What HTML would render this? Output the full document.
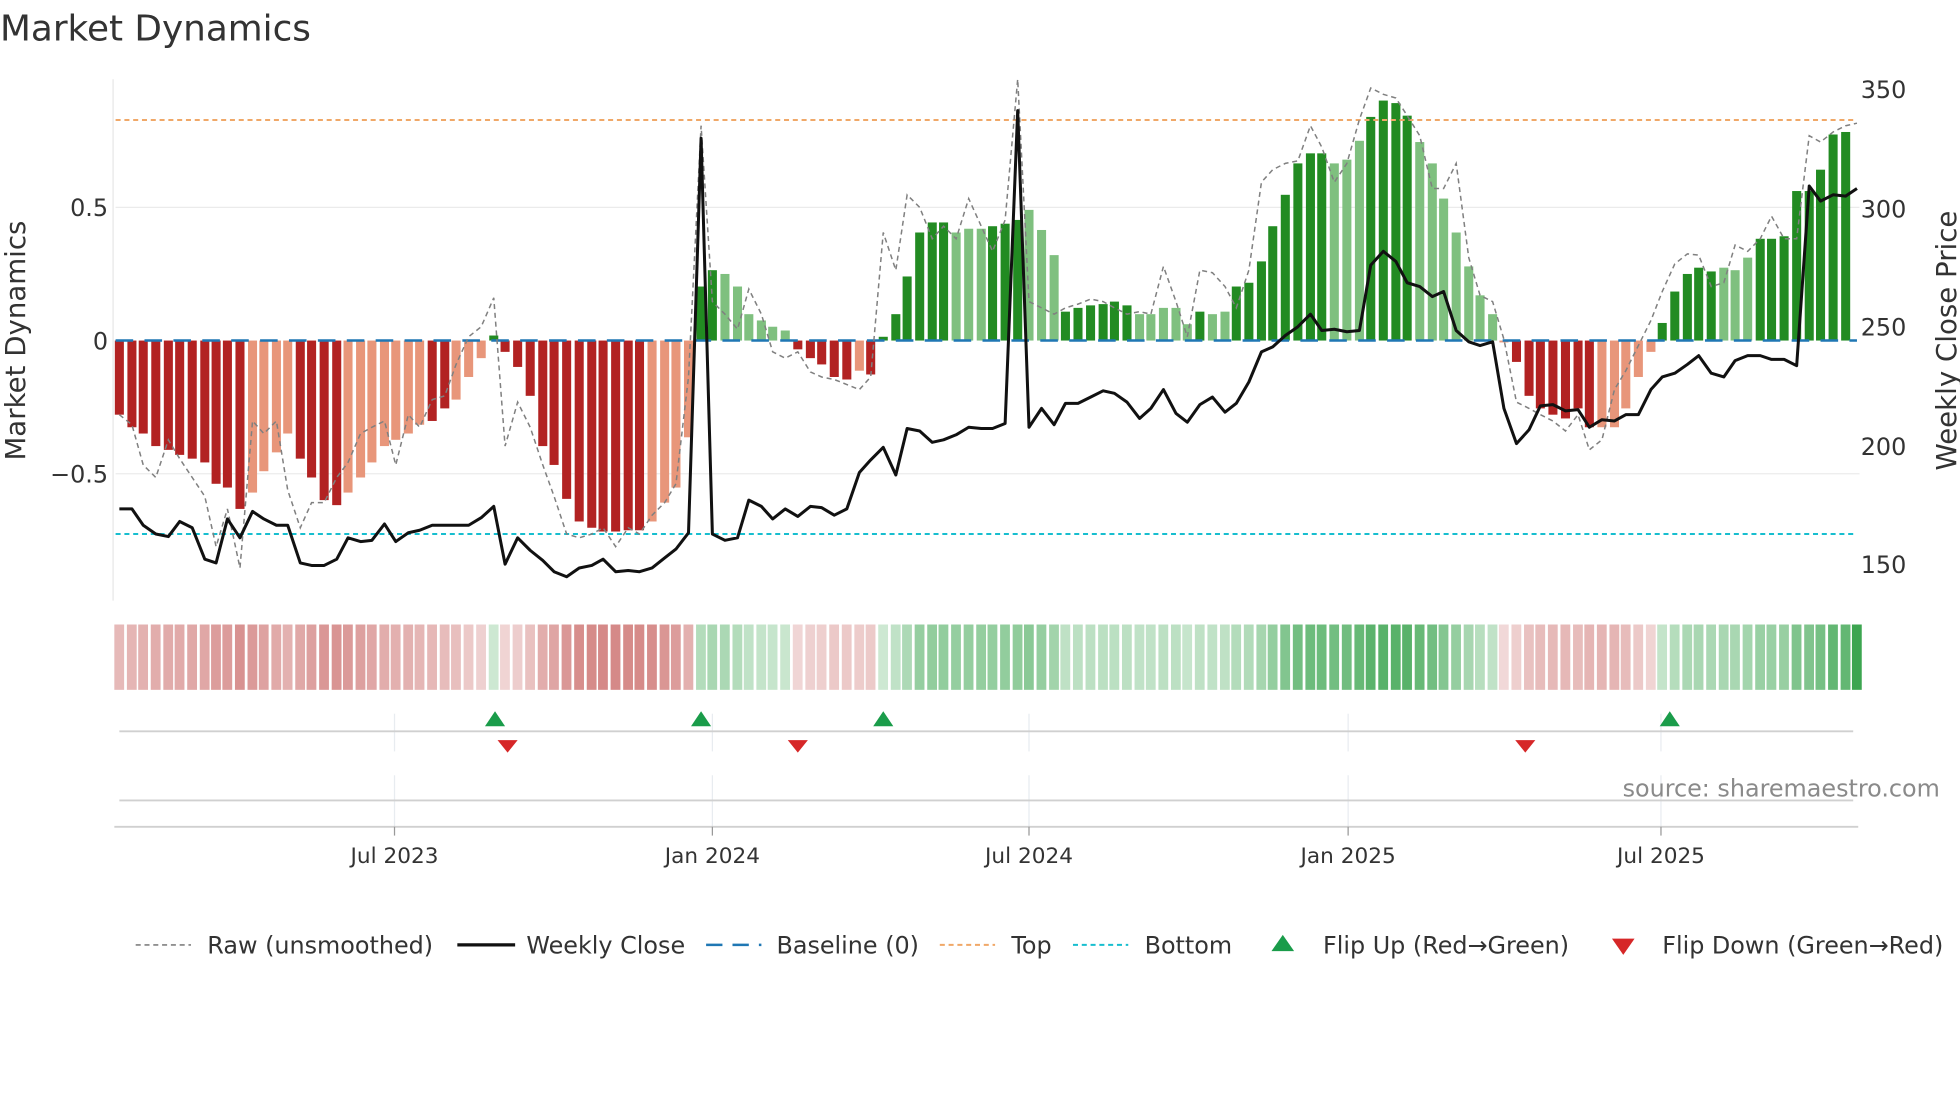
<!DOCTYPE html>
<html><head><meta charset="utf-8"><style>
html,body{margin:0;padding:0;background:#fff;}
svg{display:block;font-family:"DejaVu Sans","Liberation Sans",sans-serif;}
</style></head><body>
<svg id="s" width="1960" height="1102" viewBox="0 0 1560 877" xmlns="http://www.w3.org/2000/svg">
<rect width="1560" height="877" fill="#fff"/>
<text x="0" y="32" font-size="28.5" fill="#333">Market Dynamics</text>
<line x1="90" y1="63" x2="90" y2="478" stroke="#e6e6e6"/>
<line x1="92" y1="165" x2="1480" y2="165" stroke="#ebebeb"/>
<line x1="92" y1="377" x2="1480" y2="377" stroke="#ebebeb"/>
<g id="bars"></g>
<line x1="92" y1="271" x2="1478" y2="271" stroke="#1f77b4" stroke-width="2" stroke-dasharray="14,9"/>
<line x1="92" y1="95.5" x2="1478" y2="95.5" stroke="#f0a868" stroke-width="1.6" stroke-dasharray="4,3"/>
<line x1="92" y1="425" x2="1478" y2="425" stroke="#17becf" stroke-width="1.6" stroke-dasharray="4,3"/>
<polyline id="raw" fill="none" stroke="#808080" stroke-width="1.2" stroke-dasharray="4,3"/>
<polyline id="close" fill="none" stroke="#111" stroke-width="2.4" stroke-linejoin="round"/>
<g font-size="19" fill="#333">
<text x="86" y="172" text-anchor="end">0.5</text>
<text x="86" y="278" text-anchor="end">0</text>
<text x="86" y="384" text-anchor="end">−0.5</text>
<text x="1481" y="78">350</text>
<text x="1481" y="173">300</text>
<text x="1481" y="267">250</text>
<text x="1481" y="362">200</text>
<text x="1481" y="456">150</text>
</g>
<text transform="translate(20,271) rotate(-90)" text-anchor="middle" font-size="22" fill="#333">Market Dynamics</text>
<text transform="translate(1557,271) rotate(-90)" text-anchor="middle" font-size="22" fill="#333">Weekly Close Price</text>
<g id="strip"></g>
<g stroke="#e8ecf0" stroke-width="1">
<line x1="314" y1="568" x2="314" y2="598"/><line x1="567" y1="568" x2="567" y2="598"/><line x1="819" y1="568" x2="819" y2="598"/><line x1="1073" y1="568" x2="1073" y2="598"/><line x1="1322" y1="568" x2="1322" y2="598"/>
<line x1="314" y1="617" x2="314" y2="658"/><line x1="567" y1="617" x2="567" y2="658"/><line x1="819" y1="617" x2="819" y2="658"/><line x1="1073" y1="617" x2="1073" y2="658"/><line x1="1322" y1="617" x2="1322" y2="658"/>
</g>
<line x1="95" y1="582" x2="1475" y2="582" stroke="#d0d0d0" stroke-width="1.5"/>
<line x1="95" y1="637" x2="1475" y2="637" stroke="#d0d0d0" stroke-width="1.5"/>
<line x1="91" y1="658" x2="1479" y2="658" stroke="#d0d0d0" stroke-width="1.5"/>
<g stroke="#999" stroke-width="1"><line x1="314" y1="658" x2="314" y2="665"/><line x1="567" y1="658" x2="567" y2="665"/><line x1="819" y1="658" x2="819" y2="665"/><line x1="1073" y1="658" x2="1073" y2="665"/><line x1="1322" y1="658" x2="1322" y2="665"/></g>
<g fill="#1a9c4a"><path d="M386,578 L394,566 L402,578Z"/><path d="M550,578 L558,566 L566,578Z"/><path d="M695,578 L703,566 L711,578Z"/><path d="M1321,578 L1329,566 L1337,578Z"/></g>
<g fill="#d62728"><path d="M396,589 L404,599 L412,589Z"/><path d="M627,589 L635,599 L643,589Z"/><path d="M1206,589 L1214,599 L1222,589Z"/></g>
<text x="1544" y="634" text-anchor="end" font-size="19" fill="#8a8a8a">source: sharemaestro.com</text>
<g font-size="17.2" fill="#333" text-anchor="middle">
<text x="314" y="687">Jul 2023</text><text x="567" y="687">Jan 2024</text><text x="819" y="687">Jul 2024</text><text x="1073" y="687">Jan 2025</text><text x="1322" y="687">Jul 2025</text>
</g>
<g font-size="19" fill="#333">
<line x1="108" y1="752" x2="152" y2="752" stroke="#808080" stroke-width="1.3" stroke-dasharray="4,3"/>
<text x="165" y="759">Raw (unsmoothed)</text>
<line x1="364" y1="752" x2="410" y2="752" stroke="#111" stroke-width="2.6"/>
<text x="419" y="759">Weekly Close</text>
<line x1="562" y1="752" x2="606" y2="752" stroke="#1f77b4" stroke-width="2" stroke-dasharray="13,8"/>
<text x="618" y="759">Baseline (0)</text>
<line x1="748" y1="752" x2="792" y2="752" stroke="#f0a868" stroke-width="1.6" stroke-dasharray="4,3"/>
<text x="805" y="759">Top</text>
<line x1="854" y1="752" x2="898" y2="752" stroke="#17becf" stroke-width="1.6" stroke-dasharray="4,3"/>
<text x="911" y="759">Bottom</text>
<path d="M1012,757 L1021,744 L1030,757Z" fill="#1a9c4a"/>
<text x="1053" y="759">Flip Up (Red→Green)</text>
<path d="M1283,747 L1292,760 L1301,747Z" fill="#d62728"/>
<text x="1323" y="759">Flip Down (Green→Red)</text>
</g>
</svg>
<script>
var N='http://www.w3.org/2000/svg';
var X=[95,105,114,124,134,143,153,163,172,181,191,201,210,220,229,239,248,258,268,277,287,296,306,315,325,334,344,354,363,373,383,393,402,412,422,432,441,451,461,471,480,490,500,509,519,529,538,548,558,567,577,587,596,606,615,625,635,645,654,664,674,684,693,703,713,722,732,742,751,761,771,781,790,800,810,819,829,839,848,858,868,878,887,897,907,916,926,936,945,955,965,975,984,994,1004,1013,1023,1033,1043,1052,1062,1072,1082,1091,1101,1111,1120,1130,1140,1149,1159,1169,1178,1188,1197,1207,1217,1226,1236,1246,1256,1265,1275,1285,1294,1304,1314,1323,1333,1343,1352,1362,1372,1381,1391,1401,1410,1420,1430,1440,1449,1459,1469,1478];
var B=[330,340,345,355,358,362,365,368,385,388,405,392,375,360,345,365,380,398,402,392,380,368,355,350,345,338,335,325,318,300,285,267,280,292,315,355,370,397,415,420,423,423,422,422,415,400,388,348,228,215,218,228,250,255,260,263,278,285,290,300,302,295,298,268,250,220,185,177,177,185,182,182,180,178,175,167,183,203,248,245,243,242,240,243,250,250,245,245,258,248,250,248,228,225,208,180,155,130,122,122,130,127,112,93,80,82,92,113,130,158,185,212,235,250,272,288,315,325,330,333,325,340,340,340,325,300,280,257,232,218,213,216,213,215,205,190,190,188,152,152,135,107,105];
var C=[405,405,418,425,427,415,420,445,448,413,428,407,413,418,418,448,450,450,445,428,431,430,417,431,424,422,418,418,418,418,412,403,449,428,438,446,455,459,452,450,445,455,454,455,452,444,437,424,110,425,430,428,398,403,413,405,411,403,404,410,405,376,366,356,378,341,343,352,350,346,340,341,341,337,88,340,325,338,321,321,316,311,313,320,333,325,310,329,336,322,316,328,321,304,280,276,267,260,250,263,262,264,263,211,200,208,225,228,236,232,263,272,275,272,325,353,342,323,322,327,326,340,334,335,330,330,310,300,297,290,283,297,300,287,283,283,286,286,291,148,160,155,156,150];
var R=[330,338,370,380,350,365,380,395,435,405,452,335,345,335,390,420,400,400,380,368,345,340,335,370,330,340,318,315,290,268,260,237,355,320,340,370,395,425,428,425,420,435,420,425,410,400,385,300,100,240,250,262,230,250,280,285,280,296,300,302,306,310,300,185,215,155,165,190,180,190,158,180,200,175,63,240,245,250,245,242,238,240,245,250,248,250,212,240,268,215,217,228,245,215,145,135,130,128,100,117,145,130,95,70,75,78,92,108,150,150,130,205,235,240,270,320,325,330,335,343,330,358,350,310,295,275,255,232,210,202,203,228,225,195,200,190,172,190,190,108,113,105,100,98];
var light=function(x){var L=[[198,232],[272,340],[358,388],[515,553],[572,630],[680,688],[757,785],[815,842],[903,950],[960,980],[1058,1086],[1126,1202],[1270,1320],[1368,1395]];for(var k=0;k<L.length;k++)if(x>=L[k][0]&&x<=L[k][1])return true;return false;};
var g=document.getElementById('bars'),st=document.getElementById('strip'),rp='',cp='';
for(var i=0;i<X.length;i++){var y=B[i],neg=y>271,l=light(X[i]);
var r=document.createElementNS(N,'rect');r.setAttribute('x',X[i]-3.6);r.setAttribute('width',7.2);
r.setAttribute('y',Math.min(y,271));r.setAttribute('height',Math.max(Math.abs(y-271),1.5));
r.setAttribute('fill',neg?(l?'#e8967a':'#b22222'):(l?'#7fc07f':'#228b22'));g.appendChild(r);
var a=Math.min(1,Math.abs(y-271)/180);var s=document.createElementNS(N,'rect');
s.setAttribute('x',X[i]-4);s.setAttribute('width',7.8);s.setAttribute('y',497);s.setAttribute('height',52);
s.setAttribute('fill',neg?'rgb(200,100,98)':'rgb(60,165,80)');s.setAttribute('fill-opacity',(0.25+0.6*a).toFixed(2));st.appendChild(s);
rp+=X[i]+','+R[i]+' ';cp+=X[i]+','+C[i]+' ';}
document.getElementById('raw').setAttribute('points',rp);
document.getElementById('close').setAttribute('points',cp);
</script>
</body></html>
